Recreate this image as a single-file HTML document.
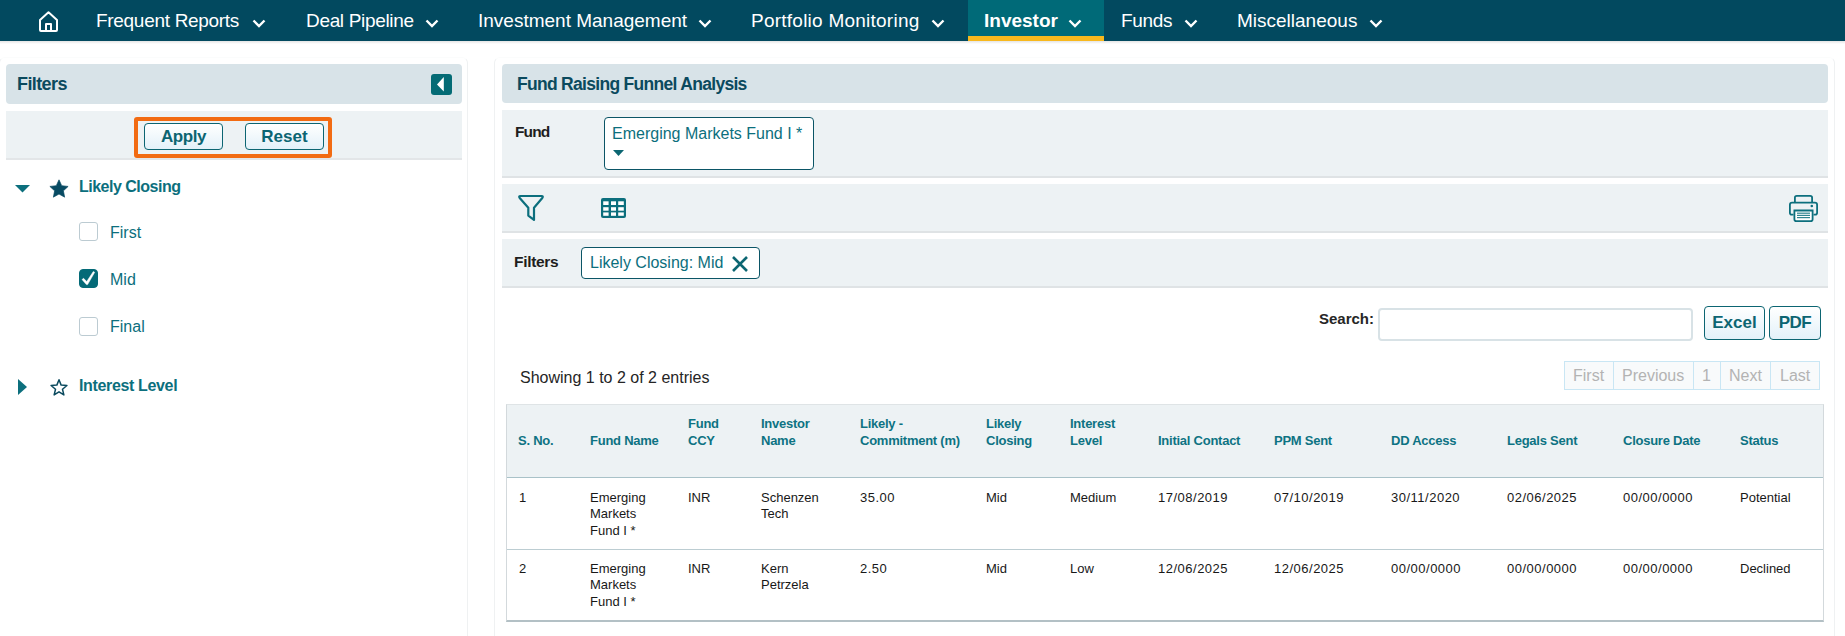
<!DOCTYPE html>
<html><head><meta charset="utf-8">
<style>
*{box-sizing:border-box;margin:0;padding:0}
html,body{width:1845px;height:636px;overflow:hidden;background:#fff;font-family:"Liberation Sans",sans-serif;position:relative}
.a{position:absolute;white-space:nowrap}
#nav{left:0;top:0;width:1845px;height:41px;background:#02495f}
#navsh{left:0;top:41px;width:1845px;height:3px;background:linear-gradient(#e4e4e4,#fff)}
.ni{color:#fff;font-size:19px;top:10px;line-height:22px}
.chev{top:19px;width:14px;height:9px}
#act{left:968px;top:0;width:136px;height:41px;background:#006a78}
#actu{left:968px;top:36px;width:136px;height:5px;background:#f8b81d}
.hdr{background:#d8e3e8;border-radius:4px}
.lt{background:#edf2f4}
.vline{width:1px;background:#f2f4f5}
.htxt{color:#0b4a5e;font-weight:bold;font-size:18px;line-height:20px}
.teal{color:#0c6f7d}
.btn{border:1px solid #0c6572;border-radius:4px;background:linear-gradient(#ffffff,#e3f1f9);color:#0c6572;font-weight:bold;text-align:center}
.cb{width:19px;height:19px;border:1px solid #bccbd2;border-radius:3px;background:#fff}
.lbl{color:#0c6f7d;font-size:16px;line-height:18px}
.dark{color:#1e1e1e}
th,td{font-family:"Liberation Sans",sans-serif}
.th{color:#0d7383;font-weight:bold;font-size:13px;line-height:17px;letter-spacing:-0.25px}
.td{color:#181818;font-size:13px;line-height:16.4px}
.dt{letter-spacing:0.5px}
</style></head>
<body>
<!-- NAV -->
<div class="a" id="nav"></div>
<div class="a" id="navsh"></div>
<div class="a" id="act"></div>
<div class="a" id="actu"></div>
<svg class="a" style="left:38px;top:10px" width="22" height="23" viewBox="0 0 22 23">
 <path d="M2 10 L10.5 2.3 L19 10 V20 Q19 21 18 21 H3 Q2 21 2 20 Z M8 21 V14 H13 V21" fill="none" stroke="#fff" stroke-width="2" stroke-linejoin="round"/>
</svg>
<div class="a ni" style="left:96px;letter-spacing:-0.3px">Frequent Reports</div>
<div class="a ni" style="left:306px;letter-spacing:-0.33px">Deal Pipeline</div>
<div class="a ni" style="left:478px">Investment Management</div>
<div class="a ni" style="left:751px;letter-spacing:0.24px">Portfolio Monitoring</div>
<div class="a ni" style="left:984px;font-weight:bold">Investor</div>
<div class="a ni" style="left:1121px;letter-spacing:-0.3px">Funds</div>
<div class="a ni" style="left:1237px">Miscellaneous</div>
<svg class="a chev" style="left:252px" viewBox="0 0 14 9"><path d="M1.5 1.5 L7 7 L12.5 1.5" fill="none" stroke="#fff" stroke-width="2.4"/></svg>
<svg class="a chev" style="left:425px" viewBox="0 0 14 9"><path d="M1.5 1.5 L7 7 L12.5 1.5" fill="none" stroke="#fff" stroke-width="2.4"/></svg>
<svg class="a chev" style="left:698px" viewBox="0 0 14 9"><path d="M1.5 1.5 L7 7 L12.5 1.5" fill="none" stroke="#fff" stroke-width="2.4"/></svg>
<svg class="a chev" style="left:931px" viewBox="0 0 14 9"><path d="M1.5 1.5 L7 7 L12.5 1.5" fill="none" stroke="#fff" stroke-width="2.4"/></svg>
<svg class="a chev" style="left:1068px" viewBox="0 0 14 9"><path d="M1.5 1.5 L7 7 L12.5 1.5" fill="none" stroke="#fff" stroke-width="2.4"/></svg>
<svg class="a chev" style="left:1184px" viewBox="0 0 14 9"><path d="M1.5 1.5 L7 7 L12.5 1.5" fill="none" stroke="#fff" stroke-width="2.4"/></svg>
<svg class="a chev" style="left:1369px" viewBox="0 0 14 9"><path d="M1.5 1.5 L7 7 L12.5 1.5" fill="none" stroke="#fff" stroke-width="2.4"/></svg>

<!-- vertical faint lines -->
<div class="a" style="left:-1px;top:57px;width:469px;height:600px;border:1px solid #eff1f2;border-top-color:#fbfcfc;border-radius:6px"></div>
<div class="a" style="left:494px;top:57px;width:1341px;height:600px;border:1px solid #eff1f2;border-top-color:#fbfcfc;border-radius:6px"></div>

<!-- LEFT PANEL -->
<div class="a hdr" style="left:6px;top:64px;width:456px;height:40px"></div>
<div class="a htxt" style="left:17px;top:74px;letter-spacing:-0.6px">Filters</div>
<div class="a" style="left:431px;top:74px;width:21px;height:21px;background:#046b75;border-radius:3px"></div>
<svg class="a" style="left:431px;top:74px" width="21" height="21" viewBox="0 0 21 21"><path d="M6 10.4 L12.8 3 V17.6 Z" fill="#fff"/></svg>

<div class="a lt" style="left:6px;top:111px;width:456px;height:49px;border-bottom:2px solid #e3e6e8"></div>
<div class="a" style="left:134px;top:117px;width:198px;height:41px;border:4px solid #f26b12;border-radius:3px"></div>
<div class="a btn" style="left:144px;top:123px;width:79px;height:27px;font-size:17px;line-height:25px;letter-spacing:-0.4px">Apply</div>
<div class="a btn" style="left:245px;top:123px;width:79px;height:27px;font-size:17px;line-height:25px">Reset</div>

<svg class="a" style="left:15px;top:185px" width="15" height="8" viewBox="0 0 15 8"><path d="M0 0 H15 L7.5 7.5 Z" fill="#0c6f7d"/></svg>
<svg class="a" style="left:49px;top:179px" width="20" height="19" viewBox="0 0 24 23"><path d="M12.00 1.00 L15.29 8.07 L23.03 9.02 L17.33 14.33 L18.82 21.98 L12.00 18.20 L5.18 21.98 L6.67 14.33 L0.97 9.02 L8.71 8.07 Z" fill="#084b63" stroke="#084b63" stroke-width="0.8" stroke-linejoin="round"/></svg>
<div class="a htxt teal" style="left:79px;top:177px;font-size:16px;letter-spacing:-0.5px;color:#0c6f7d">Likely Closing</div>

<div class="a cb" style="left:79px;top:222px"></div>
<div class="a lbl" style="left:110px;top:224px">First</div>
<div class="a cb" style="left:79px;top:269px;background:#046a77;border-color:#046a77;border-radius:4px"></div>
<svg class="a" style="left:79px;top:269px" width="19" height="19" viewBox="0 0 19 19"><path d="M3 10.6 L4.6 9.3 L7.7 12.6 L14.3 2.5 L15.7 3.3 L8.6 15.6 L7.4 15.6 Z" fill="#fff" stroke="#fff" stroke-width="0.5" stroke-linejoin="round"/></svg>
<div class="a lbl" style="left:110px;top:271px">Mid</div>
<div class="a cb" style="left:79px;top:317px"></div>
<div class="a lbl" style="left:110px;top:318px">Final</div>

<svg class="a" style="left:18px;top:379px" width="9" height="16" viewBox="0 0 9 16"><path d="M0 0 L9 8 L0 16 Z" fill="#0c6f7d"/></svg>
<svg class="a" style="left:49px;top:378px" width="20" height="19" viewBox="0 0 24 23"><path d="M12 2 L14.6 8.6 L21.6 9.1 L16.2 13.6 L17.9 20.5 L12 16.7 L6.1 20.5 L7.8 13.6 L2.4 9.1 L9.4 8.6 Z" fill="none" stroke="#0b4a5e" stroke-width="1.8" stroke-linejoin="round"/></svg>
<div class="a htxt teal" style="left:79px;top:376px;font-size:16px;letter-spacing:-0.35px;color:#0c6f7d">Interest Level</div>

<!-- RIGHT PANEL -->
<div class="a hdr" style="left:502px;top:64px;width:1326px;height:39px"></div>
<div class="a htxt" style="left:517px;top:74px;font-size:17.5px;letter-spacing:-0.7px">Fund Raising Funnel Analysis</div>

<div class="a lt" style="left:502px;top:110px;width:1326px;height:68px;border-bottom:2px solid #dfe3e5"></div>
<div class="a dark" style="left:515px;top:123px;font-size:15.5px;font-weight:bold;line-height:18px;letter-spacing:-0.9px">Fund</div>
<div class="a" style="left:604px;top:117px;width:210px;height:53px;border:1.5px solid #0b5566;border-radius:4px;background:#fff"></div>
<div class="a lbl" style="left:612px;top:125px">Emerging Markets Fund I *</div>
<svg class="a" style="left:613px;top:150px" width="11" height="6" viewBox="0 0 11 6"><path d="M0 0 H11 L5.5 6 Z" fill="#0c6672"/></svg>

<div class="a lt" style="left:502px;top:184px;width:1326px;height:49px;border-bottom:2px solid #dfe3e5"></div>
<svg class="a" style="left:517px;top:193px" width="28" height="28" viewBox="0 0 28 28"><path d="M3.5 3 H24.5 Q26.6 3 25.3 5 L17 14.8 V26.9 L11.3 22.6 V14.8 L2.7 5 Q1.4 3 3.5 3 Z" fill="none" stroke="#0c6f7d" stroke-width="2.2" stroke-linejoin="round"/></svg>
<svg class="a" style="left:601px;top:198px" width="25" height="20" viewBox="0 0 25 20">
 <rect x="0" y="0" width="25" height="20" rx="2" fill="#0c6f7d"/>
 <g fill="#fff"><rect x="2.2" y="3.3" width="5.4" height="3.7"/><rect x="10" y="3.3" width="5.0" height="3.7"/><rect x="17.2" y="3.3" width="5.6" height="3.7"/><rect x="2.2" y="9.2" width="5.4" height="3.5"/><rect x="10" y="9.2" width="5.0" height="3.5"/><rect x="17.2" y="9.2" width="5.6" height="3.5"/><rect x="2.2" y="14.4" width="5.4" height="3.4"/><rect x="10" y="14.4" width="5.0" height="3.4"/><rect x="17.2" y="14.4" width="5.6" height="3.4"/></g>
</svg>
<svg class="a" style="left:1789px;top:194.5px" width="29" height="27" viewBox="0 0 29 27">
 <path d="M5.9 7.5 V2.8 Q5.9 0.9 7.8 0.9 H21.2 Q23.1 0.9 23.1 2.8 V7.5" fill="none" stroke="#0c6f7d" stroke-width="1.8"/>
 <path d="M4.5 19.6 H2.8 Q0.9 19.6 0.9 17.7 V9.8 Q0.9 7.6 3.1 7.6 H25.9 Q28.1 7.6 28.1 9.8 V17.7 Q28.1 19.6 26.2 19.6 H24.5" fill="none" stroke="#0c6f7d" stroke-width="1.8"/>
 <path d="M5.4 15.5 H23.6 V24.2 Q23.6 26.1 21.7 26.1 H7.3 Q5.4 26.1 5.4 24.2 Z" fill="#fff" stroke="#0c6f7d" stroke-width="1.8"/>
 <g fill="#0c6f7d" opacity="0.85"><rect x="8" y="17.6" width="13" height="1.2"/><rect x="8" y="19.8" width="13" height="1.2"/><rect x="8" y="22" width="13" height="1.2"/></g>
 <circle cx="22.8" cy="11" r="1.3" fill="#0c6f7d"/>
</svg>

<div class="a lt" style="left:502px;top:239px;width:1326px;height:49px;border-bottom:2px solid #dfe3e5"></div>
<div class="a dark" style="left:514px;top:253px;font-size:15.5px;font-weight:bold;line-height:18px;letter-spacing:-0.3px">Filters</div>
<div class="a" style="left:581px;top:247px;width:179px;height:32px;border:1.5px solid #0b5566;border-radius:4px;background:#fff"></div>
<div class="a lbl" style="left:590px;top:254px">Likely Closing: Mid</div>
<svg class="a" style="left:731px;top:255px" width="18" height="18" viewBox="0 0 18 18"><path d="M2 2 L16 16 M16 2 L2 16" stroke="#0c6672" stroke-width="2.6"/></svg>

<!-- search -->
<div class="a dark" style="left:1319px;top:310px;font-size:15px;font-weight:bold;line-height:18px;color:#262626">Search:</div>
<div class="a" style="left:1378px;top:308px;width:315px;height:33px;border:2px solid #d8e2e6;border-radius:4px;background:#fff"></div>
<div class="a btn" style="left:1704px;top:306px;width:61px;height:34px;font-size:17px;line-height:32px;border-width:1.5px">Excel</div>
<div class="a btn" style="left:1769px;top:306px;width:52px;height:34px;font-size:17px;line-height:32px;border-width:1.5px;letter-spacing:-0.5px">PDF</div>

<div class="a" style="left:520px;top:369px;font-size:16px;line-height:18px;color:#252525">Showing 1 to 2 of 2 entries</div>

<!-- pagination -->
<div class="a" style="left:1564px;top:361px;width:256px;height:29px;border:1px solid #c9e6f4;background:#f8fafb"></div>
<div class="a" style="left:1613px;top:361px;width:1px;height:29px;background:#c9e6f4"></div>
<div class="a" style="left:1693px;top:361px;width:1px;height:29px;background:#c9e6f4"></div>
<div class="a" style="left:1720px;top:361px;width:1px;height:29px;background:#c9e6f4"></div>
<div class="a" style="left:1770px;top:361px;width:1px;height:29px;background:#c9e6f4"></div>
<div class="a" style="left:1573px;top:367px;font-size:16px;line-height:18px;color:#b3b3b3">First</div>
<div class="a" style="left:1622px;top:367px;font-size:16px;line-height:18px;color:#b3b3b3">Previous</div>
<div class="a" style="left:1702px;top:367px;font-size:16px;line-height:18px;color:#b3b3b3">1</div>
<div class="a" style="left:1729px;top:367px;font-size:16px;line-height:18px;color:#b3b3b3">Next</div>
<div class="a" style="left:1780px;top:367px;font-size:16px;line-height:18px;color:#b3b3b3">Last</div>

<!-- TABLE -->
<div class="a" style="left:506px;top:404px;width:1318px;height:218px;border:1px solid #d3d9dc;border-top:1px solid #dfe4e6;border-bottom:2px solid #b3c0c5"></div>
<div class="a lt" style="left:507px;top:405px;width:1316px;height:73px;border-bottom:1.5px solid #a9c2c8"></div>
<div class="a" style="left:507px;top:549px;width:1316px;height:1px;background:#bccdd2"></div>

<div class="a th" style="left:518px;top:432px">S. No.</div>
<div class="a th" style="left:590px;top:432px">Fund Name</div>
<div class="a th" style="left:688px;top:415px">Fund<br>CCY</div>
<div class="a th" style="left:761px;top:415px">Investor<br>Name</div>
<div class="a th" style="left:860px;top:415px">Likely -<br>Commitment (m)</div>
<div class="a th" style="left:986px;top:415px">Likely<br>Closing</div>
<div class="a th" style="left:1070px;top:415px">Interest<br>Level</div>
<div class="a th" style="left:1158px;top:432px">Initial Contact</div>
<div class="a th" style="left:1274px;top:432px">PPM Sent</div>
<div class="a th" style="left:1391px;top:432px">DD Access</div>
<div class="a th" style="left:1507px;top:432px">Legals Sent</div>
<div class="a th" style="left:1623px;top:432px">Closure Date</div>
<div class="a th" style="left:1740px;top:432px">Status</div>

<div class="a td" style="left:519px;top:490px">1</div>
<div class="a td" style="left:590px;top:490px">Emerging<br>Markets<br>Fund I *</div>
<div class="a td" style="left:688px;top:490px">INR</div>
<div class="a td" style="left:761px;top:490px">Schenzen<br>Tech</div>
<div class="a td dt" style="left:860px;top:490px">35.00</div>
<div class="a td" style="left:986px;top:490px">Mid</div>
<div class="a td" style="left:1070px;top:490px">Medium</div>
<div class="a td dt" style="left:1158px;top:490px">17/08/2019</div>
<div class="a td dt" style="left:1274px;top:490px">07/10/2019</div>
<div class="a td dt" style="left:1391px;top:490px">30/11/2020</div>
<div class="a td dt" style="left:1507px;top:490px">02/06/2025</div>
<div class="a td dt" style="left:1623px;top:490px">00/00/0000</div>
<div class="a td" style="left:1740px;top:490px">Potential</div>

<div class="a td" style="left:519px;top:561px">2</div>
<div class="a td" style="left:590px;top:561px">Emerging<br>Markets<br>Fund I *</div>
<div class="a td" style="left:688px;top:561px">INR</div>
<div class="a td" style="left:761px;top:561px">Kern<br>Petrzela</div>
<div class="a td dt" style="left:860px;top:561px">2.50</div>
<div class="a td" style="left:986px;top:561px">Mid</div>
<div class="a td" style="left:1070px;top:561px">Low</div>
<div class="a td dt" style="left:1158px;top:561px">12/06/2025</div>
<div class="a td dt" style="left:1274px;top:561px">12/06/2025</div>
<div class="a td dt" style="left:1391px;top:561px">00/00/0000</div>
<div class="a td dt" style="left:1507px;top:561px">00/00/0000</div>
<div class="a td dt" style="left:1623px;top:561px">00/00/0000</div>
<div class="a td" style="left:1740px;top:561px">Declined</div>

</body></html>
